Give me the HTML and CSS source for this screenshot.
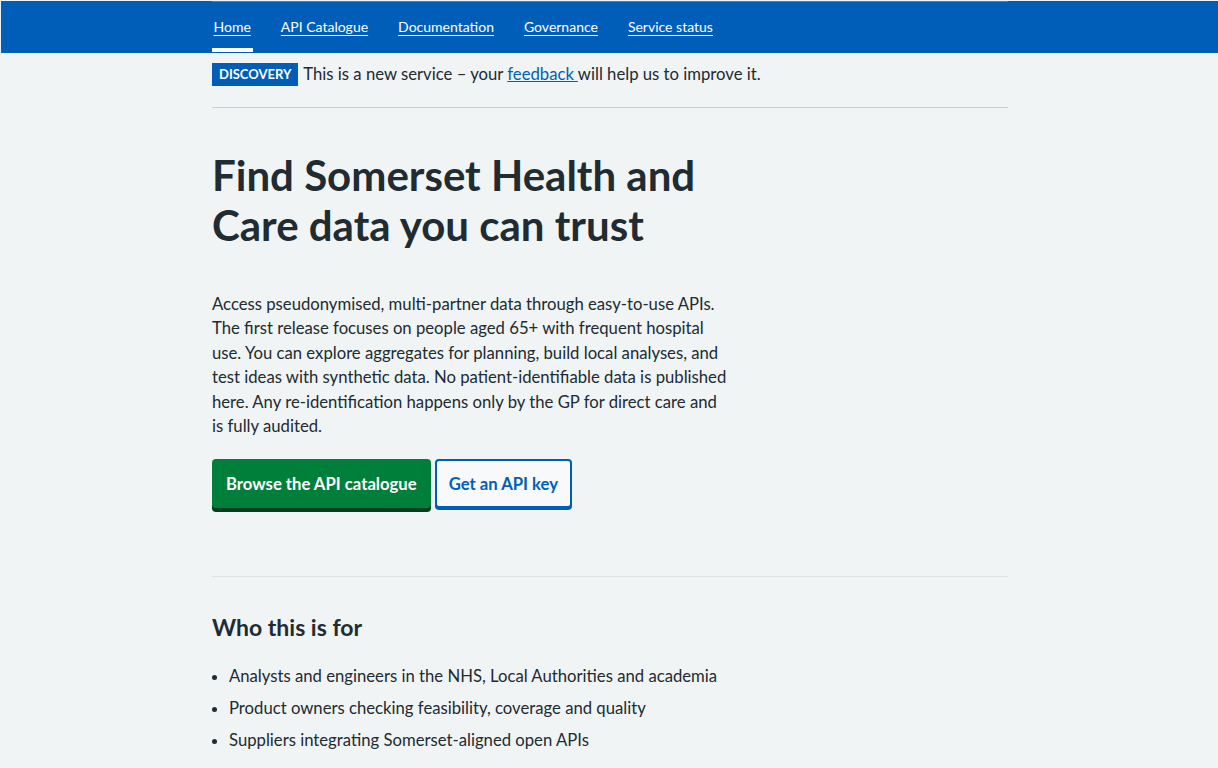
FILE: index.html
```html
<!DOCTYPE html>
<html lang="en">
<head>
<meta charset="utf-8">
<title>Somerset Health and Care data</title>
<link rel="stylesheet" href="styles.css">
</head>
<body>
<header class="header">
  <nav class="nav">
    <ul class="nav-list">
      <li class="nav-item nav-item--active"><a href="#">Home</a></li>
      <li class="nav-item"><a href="#">API Catalogue</a></li>
      <li class="nav-item"><a href="#">Documentation</a></li>
      <li class="nav-item"><a href="#">Governance</a></li>
      <li class="nav-item"><a href="#">Service status</a></li>
    </ul>
  </nav>
</header>
<main class="container">
  <div class="phase">
    <strong class="tag">DISCOVERY</strong>
    <span class="phase-text">This is a new service – your <a href="#">feedback </a>will help us to improve it.</span>
  </div>
  <hr class="rule rule--top">
  <h1 class="title">Find Somerset Health and Care data you can trust</h1>
  <p class="lede">Access pseudonymised, multi-partner data through easy-to-use APIs. The first release focuses on people aged 65+ with frequent hospital use. You can explore aggregates for planning, build local analyses, and test ideas with synthetic data. No patient-identifiable data is published here. Any re-identification happens only by the GP for direct care and is fully audited.</p>
  <div class="actions">
    <a class="button button--primary" href="#">Browse the API catalogue</a>
    <a class="button button--secondary" href="#">Get an API key</a>
  </div>
  <hr class="rule rule--section">
  <h2 class="subtitle">Who this is for</h2>
  <ul class="bullets">
    <li>Analysts and engineers in the NHS, Local Authorities and academia</li>
    <li>Product owners checking feasibility, coverage and quality</li>
    <li>Suppliers integrating Somerset-aligned open APIs</li>
  </ul>
</main>
</body>
</html>
```
FILE: styles.css
```css
* { box-sizing: border-box; }
html, body { margin: 0; padding: 0; }
body {
  background: #f0f4f5;
  color: #212b32;
  font-family: Lato, "Noto Sans", sans-serif;
}
.header {
  background: #005eb8;
  height: 52px;
  border-left: 1px solid #e8eef5;
}
.nav {
  width: 796px;
  margin-left: calc(50% - 398px);
  border-top: 1px solid #3b7fc6;
  margin-top: 1px;
}
.nav-list {
  list-style: none;
  margin: 0;
  padding: 0;
  display: flex;
  gap: 26px;
}
.nav-item {
  height: 50px;
  display: flex;
  align-items: center;
  padding-bottom: 2px;
  position: relative;
}
.nav-item a {
  color: #fff;
  font-size: 14px;
  text-decoration: underline;
  text-underline-offset: 3px;
  padding: 0 2px;
}
.nav-item--active::after {
  content: "";
  position: absolute;
  left: 0;
  right: 0;
  bottom: 0;
  height: 4px;
  background: #fff;
}
.container {
  width: 796px;
  margin-left: calc(50% - 397px);
}
.phase {
  display: flex;
  align-items: center;
  gap: 5px;
  padding-top: 10px;
}
.tag {
  background: #005eb8;
  color: #fff;
  font-size: 13px;
  font-weight: 700;
  padding: 3px 7px;
  line-height: 17px;
}
.phase-text {
  font-size: 16.7px;
  padding-bottom: 1px;
}
.phase-text a { color: #005eb8; }
.rule {
  border: 0;
  margin: 0;
}
.rule--top {
  border-top: 1px solid #c9ced1;
  margin-top: 21px;
}
.title {
  font-size: 42px;
  line-height: 50px;
  font-weight: 700;
  margin: 42px 0 0;
  max-width: 530px;
}
.lede {
  font-size: 16.7px;
  line-height: 24.4px;
  margin: 42px 0 0;
  max-width: 517px;
}
.actions {
  display: flex;
  gap: 4px;
  margin-top: 21px;
}
.button {
  font-size: 16.7px;
  font-weight: 700;
  text-decoration: none;
  display: inline-flex;
  align-items: center;
  height: 49px;
  border-radius: 4px;
}
.button--primary {
  background: #007f3b;
  color: #fff;
  padding: 0 14px;
  box-shadow: 0 4px 0 #00401e;
}
.button--secondary {
  background: #f7f9fa;
  color: #005eb8;
  border: 2px solid #005eb8;
  padding: 0 12px;
  box-shadow: 0 2px 0 #005eb8;
}
.rule--section {
  border-top: 1px solid #dde1e3;
  margin-top: 68px;
}
.subtitle {
  font-size: 23px;
  font-weight: 700;
  margin: 35px 0 0;
  line-height: 30px;
}
.bullets {
  margin: 22px 0 0;
  padding: 0 0 0 17px;
  font-size: 16.7px;
}
.bullets li {
  line-height: 24px;
  margin-bottom: 8px;
}
```
